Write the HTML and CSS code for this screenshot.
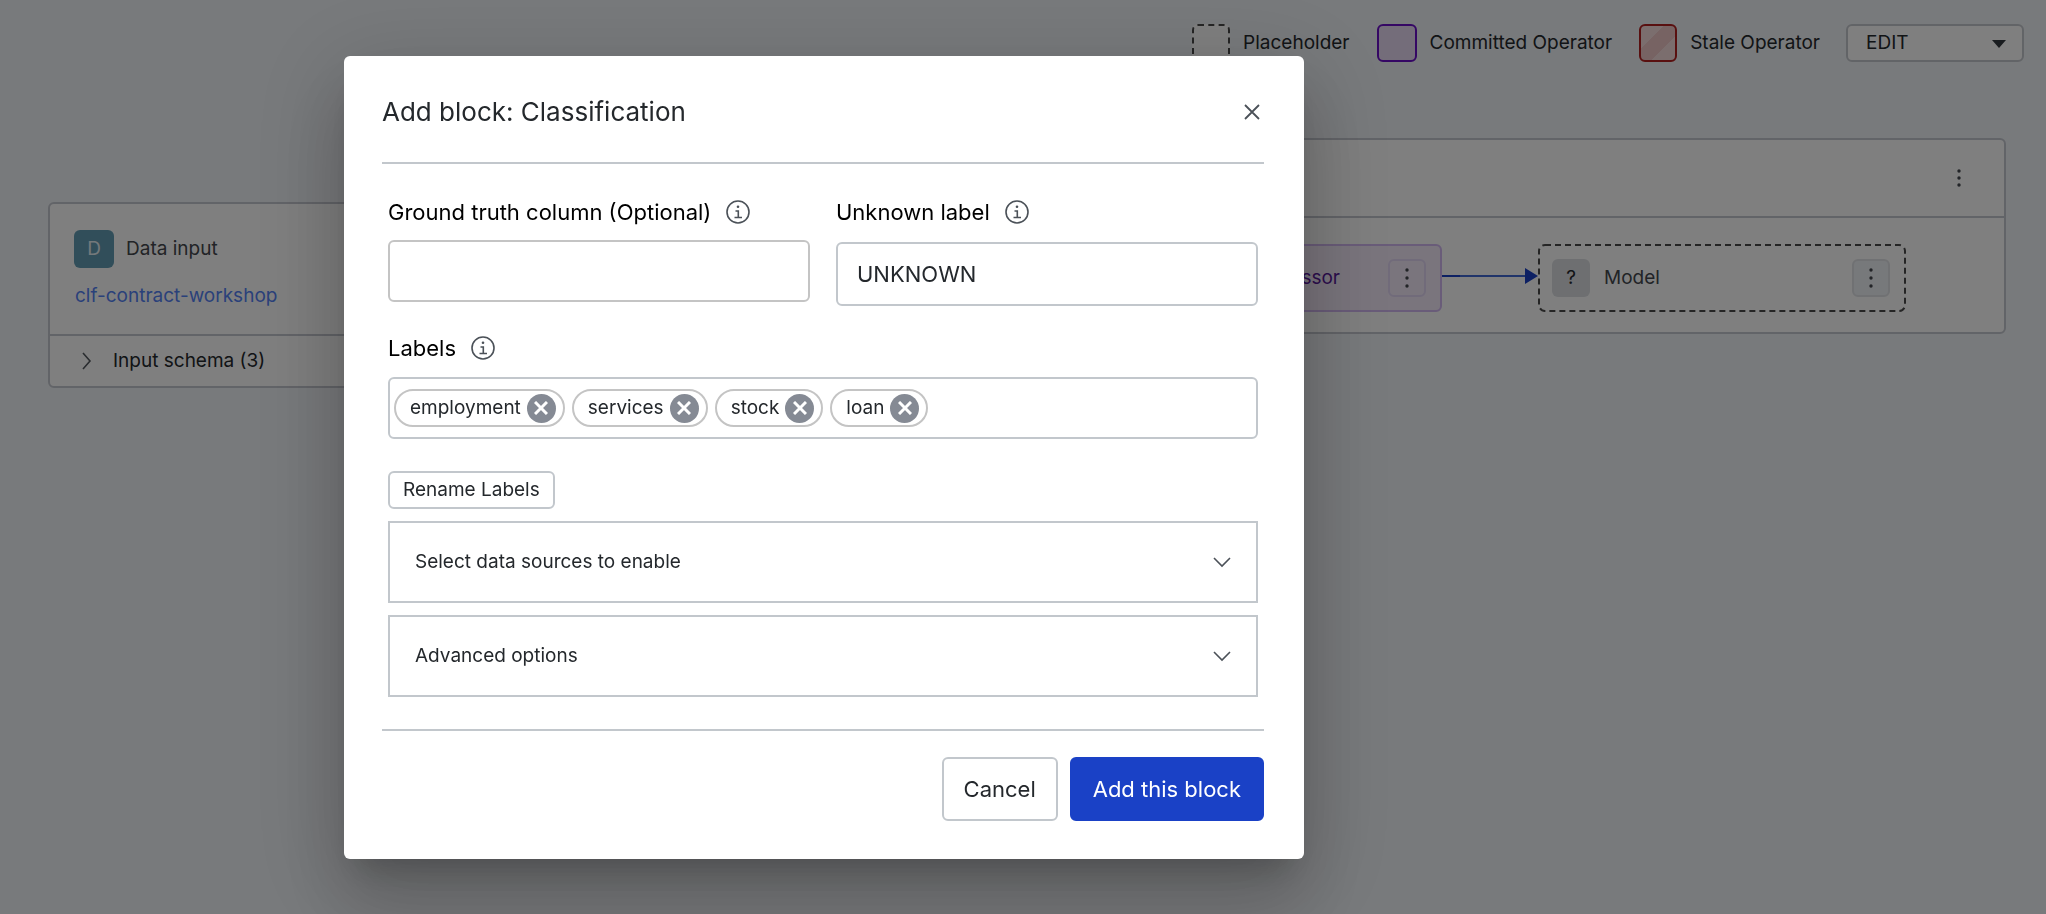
FILE: index.html
```html
<!DOCTYPE html>
<html lang="en">
    <head>
        <meta charset="utf-8">
        <title>Add block: Classification</title>
        <meta name="viewport" content="width=device-width, initial-scale=1.0">
        <link rel="stylesheet" href="styles.css">
    </head>
    <body>
        <header class="topbar">
            <ul class="legend">
                <li><span class="swatch placeholder"></span>Placeholder</li>
                <li><span class="swatch committed"></span>Committed Operator</li>
                <li><span class="swatch stale"></span>Stale Operator</li>
            </ul>
            <div class="mode">
                <select class="mode-select" aria-label="Mode">
                    <option>EDIT</option>
                </select>
                <svg class="mode-caret" width="14" height="8" viewBox="0 0 14 8"><path d="M0 0h14L7 8z" fill="#33383e"/></svg>
            </div>
        </header>

        <main class="flow">
            <section class="card input-card">
                <div class="input-body">
                    <div class="input-title"><span class="tile teal">D</span>Data input</div>
                    <a class="dataset" href="#">clf-contract-workshop</a>
                </div>
                <button class="schema" type="button">
                    <svg width="12" height="18" viewBox="0 0 12 18"><path d="M2 1l7 8-7 8" fill="none" stroke="#555a60" stroke-width="1.6"/></svg>
                    Input schema (3)
                </button>
            </section>

            <section class="card block-card">
                <div class="block-head">
                    <button class="kebab plain" type="button" aria-label="Block menu">
                        <svg width="4" height="20" viewBox="0 0 4 20"><circle cx="2" cy="3" r="1.7"/><circle cx="2" cy="10" r="1.7"/><circle cx="2" cy="17" r="1.7"/></svg>
                    </button>
                </div>
                <div class="nodes">
                    <div class="node node-committed">
                        <span class="node-name">Preprocessor</span>
                        <button class="kebab" type="button" aria-label="Preprocessor menu">
                            <svg width="4" height="20" viewBox="0 0 4 20"><circle cx="2" cy="2" r="1.7"/><circle cx="2" cy="10" r="1.7"/><circle cx="2" cy="18" r="1.7"/></svg>
                        </button>
                    </div>
                    <svg class="arrow" width="96" height="20" viewBox="0 0 96 20"><path d="M0 7h18v2H0z" fill="#1a41c6"/><path d="M18 7h65v2H18z" fill="#4169d5"/><path d="M83 0l13 8-13 8z" fill="#1a41c6"/></svg>
                    <div class="node node-placeholder">
                        <svg class="dash" width="100%" height="100%"><rect x="1" y="1" rx="6"/></svg>
                        <span class="tile grey">?</span>
                        <span class="node-name">Model</span>
                        <button class="kebab" type="button" aria-label="Model menu">
                            <svg width="4" height="20" viewBox="0 0 4 20"><circle cx="2" cy="2" r="1.7"/><circle cx="2" cy="10" r="1.7"/><circle cx="2" cy="18" r="1.7"/></svg>
                        </button>
                    </div>
                </div>
            </section>
        </main>

        <div class="overlay">
            <form class="dialog" role="dialog" aria-labelledby="dialog-title">
                <div class="dialog-head">
                    <h1 id="dialog-title">Add block: Classification</h1>
                    <button class="close" type="button" aria-label="Close">
                        <svg width="16" height="16" viewBox="0 0 16 16"><path d="M1 1l14 14M15 1L1 15" fill="none" stroke="#4b5158" stroke-width="1.8"/></svg>
                    </button>
                </div>

                <div class="dialog-body">
                    <div class="fields">
                        <div class="field">
                            <div class="field-label">
                                <label for="truth">Ground truth column (Optional)</label>
                                <svg class="info" viewBox="0 0 24 24"><circle cx="12" cy="12" r="11"/><path d="M9.500 11h2.800v6.200M8.500 17.500h7.500"/><circle class="dot" cx="12" cy="6.800" r="1.300"/></svg>
                            </div>
                            <input class="text-box truth" id="truth" type="text">
                        </div>
                        <div class="field">
                            <div class="field-label">
                                <label for="unknown">Unknown label</label>
                                <svg class="info" viewBox="0 0 24 24"><circle cx="12" cy="12" r="11"/><path d="M9.500 11h2.800v6.200M8.500 17.500h7.500"/><circle class="dot" cx="12" cy="6.800" r="1.300"/></svg>
                            </div>
                            <input class="text-box unknown" id="unknown" type="text" value="UNKNOWN">
                        </div>
                    </div>

                    <div class="field">
                        <div class="field-label">
                            <label for="labels">Labels</label>
                            <svg class="info" viewBox="0 0 24 24"><circle cx="12" cy="12" r="11"/><path d="M9.500 11h2.800v6.200M8.500 17.500h7.500"/><circle class="dot" cx="12" cy="6.800" r="1.300"/></svg>
                        </div>
                        <div class="tags">
                            <span class="tag">employment <button class="remove" type="button" aria-label="Remove employment"><svg width="14" height="14" viewBox="0 0 14 14"><path d="M1 1l12 12M13 1L1 13"/></svg></button></span>
                            <span class="tag">services <button class="remove" type="button" aria-label="Remove services"><svg width="14" height="14" viewBox="0 0 14 14"><path d="M1 1l12 12M13 1L1 13"/></svg></button></span>
                            <span class="tag">stock <button class="remove" type="button" aria-label="Remove stock"><svg width="14" height="14" viewBox="0 0 14 14"><path d="M1 1l12 12M13 1L1 13"/></svg></button></span>
                            <span class="tag">loan <button class="remove" type="button" aria-label="Remove loan"><svg width="14" height="14" viewBox="0 0 14 14"><path d="M1 1l12 12M13 1L1 13"/></svg></button></span>
                            <input class="tag-input" id="labels" type="text">
                        </div>
                    </div>

                    <button class="rename" type="button">Rename Labels</button>

                    <details class="panel">
                        <summary>Select data sources to enable
                            <svg width="18" height="12" viewBox="0 0 18 12"><path d="M1 2l8 8 8-8"/></svg>
                        </summary>
                    </details>
                    <details class="panel">
                        <summary>Advanced options
                            <svg width="18" height="12" viewBox="0 0 18 12"><path d="M1 2l8 8 8-8"/></svg>
                        </summary>
                    </details>
                </div>

                <div class="dialog-foot">
                    <button class="btn" type="button">Cancel</button>
                    <button class="btn primary" type="submit">Add this block</button>
                </div>
            </form>
        </div>
    </body>
</html>
```
FILE: styles.css
```css
* {
  box-sizing: border-box;
}
body {
  margin: 0;
  background: #f1f4f8;
  color: #24282c;
  font-family: Inter, "Liberation Sans", sans-serif;
  font-size: 19px;
  line-height: 24px;
}
button, input, select {
  font: inherit;
  color: inherit;
}
button {
  padding: 0;
  border: 0;
  background: none;
  cursor: pointer;
}
svg {
  display: block;
  flex: none;
}

/* top bar */
.topbar {
  display: flex;
  justify-content: flex-end;
  gap: 26px;
  padding: 24px 22px 0;
}
.legend {
  display: flex;
  gap: 27px;
  margin: 0;
  padding: 0;
  list-style: none;
}
.legend li {
  display: flex;
  align-items: center;
  gap: 13px;
}
.swatch {
  width: 38px;
  height: 38px;
  border: 2px solid;
  border-radius: 6px;
}
.swatch.placeholder {
  border: 2px dashed #4a4a4a;
  background: #fff;
}
.swatch.committed {
  width: 40px;
  border-color: #6a0fc8;
  background: #e9daf5;
}
.swatch.stale {
  border-color: #b32020;
  background: linear-gradient(135deg, #f6dcdc 33%, #eec6c6 33%, #eec6c6 66%, #f6dcdc 66%);
}
.mode {
  position: relative;
}
.mode-select {
  appearance: none;
  width: 178px;
  height: 38px;
  padding: 0 18px;
  border: 2px solid #c5c8ce;
  border-radius: 6px;
  background: #fff;
}
.mode-caret {
  position: absolute;
  top: 16px;
  right: 18px;
  pointer-events: none;
}

/* pipeline behind the dialog */
.flow {
  display: flex;
  align-items: flex-start;
  gap: 96px;
  padding: 76px 40px 0 48px;
}
.card {
  border: 2px solid #c5c8d0;
  border-radius: 6px;
  background: #fff;
}
.input-card {
  width: 420px;
  margin-top: 64px;
}
.input-body {
  height: 130px;
  padding: 26px 24px 0;
}
.input-title {
  display: flex;
  align-items: center;
  gap: 12px;
  color: #44484e;
}
.tile {
  display: flex;
  align-items: center;
  justify-content: center;
  width: 38px;
  height: 38px;
  border-radius: 6px;
}
.tile.teal {
  width: 40px;
  background: #629cb4;
  color: #e8f2f6;
}
.tile.grey {
  background: #dcdfe3;
  color: #24282c;
}
.dataset {
  display: inline-block;
  margin-top: 16px;
  padding-left: 1px;
  color: #5582f4;
  text-decoration: none;
}
.schema {
  display: flex;
  align-items: center;
  gap: 20px;
  width: 100%;
  height: 52px;
  padding-left: 31px;
  border-top: 2px solid #c5c8d0;
}
.block-card {
  flex: 1;
}
.block-head {
  display: flex;
  justify-content: flex-end;
  align-items: center;
  height: 78px;
  padding-right: 26px;
  border-bottom: 2px solid #c5c8d0;
}
.nodes {
  display: flex;
  align-items: center;
  justify-content: flex-end;
  padding: 26px 98px 20px 40px;
}
.node {
  display: flex;
  align-items: center;
  gap: 14px;
  width: 368px;
  height: 68px;
  padding: 0 16px 0 14px;
  border-radius: 6px;
}
.node-name {
  flex: 1;
  color: #44484e;
}
.node-committed {
  border: 2px solid #d3b8f2;
  padding: 0 14px;
  background: #f5ebfb;
}
.node-committed .node-name {
  padding-right: 34px;
  color: #5a1a9c;
  text-align: right;
}
.node-placeholder {
  position: relative;
}
.dash {
  position: absolute;
  inset: 0;
}
.dash rect {
  width: calc(100% - 2px);
  height: calc(100% - 2px);
  fill: none;
  stroke: #4a4a4a;
  stroke-width: 2;
  stroke-dasharray: 6 4;
}
.kebab {
  display: flex;
  align-items: center;
  justify-content: center;
  position: relative;
  width: 38px;
  height: 38px;
  border: 2px solid #e0e3e7;
  border-radius: 6px;
  background: #eff2f6;
  fill: #44484e;
}
.kebab.plain {
  border: 0;
  background: none;
}
.node-committed .kebab {
  border-color: #e2d6f4;
  background: none;
}

/* dialog */
.overlay {
  position: fixed;
  inset: 0;
  padding: 56px 0 0 344px;
  background: rgba(0, 0, 0, .5);
}
.dialog {
  max-width: 960px;
  padding: 34px 40px 38px 38px;
  border-radius: 6px;
  background: #fff;
  box-shadow: 0 22px 30px -14px rgba(0, 0, 0, .2), 0 48px 76px 6px rgba(0, 0, 0, .14), 0 18px 92px 16px rgba(0, 0, 0, .12);
}
.dialog-head {
  display: flex;
  align-items: center;
  justify-content: space-between;
  height: 74px;
  padding-bottom: 28px;
  border-bottom: 2px solid #c2c7cc;
}
.dialog-head h1 {
  margin: 0;
  font-size: 26px;
  font-weight: 400;
  line-height: 40px;
}
.close {
  padding: 4px;
}
.dialog-body {
  padding: 32px 6px;
}
.fields {
  display: grid;
  grid-template-columns: 1fr 1fr;
  gap: 26px;
}
.field-label {
  display: flex;
  align-items: center;
  gap: 15px;
  height: 32px;
  color: #000;
  font-size: 22px;
}
.info {
  width: 24px;
  height: 24px;
  fill: none;
  stroke: #4b5158;
  stroke-width: 1.6;
}
.info .dot {
  fill: #4b5158;
  stroke: none;
}
.text-box {
  display: block;
  width: 100%;
  height: 64px;
  padding: 0 19px;
  border: 2px solid #c2c7cc;
  border-radius: 6px;
  background: #fff;
  font-size: 22px;
}
.unknown {
  margin-top: 14px;
}
.truth {
  height: 62px;
  margin-top: 12px;
  border-color: #c4c4c4;
}
.fields + .field {
  margin-top: 26px;
}
.tags {
  display: flex;
  align-items: center;
  gap: 7px;
  height: 62px;
  margin-top: 13px;
  padding: 0 4px;
  border: 2px solid #c2c7cc;
  border-radius: 6px;
}
.tag {
  display: flex;
  align-items: center;
  gap: 6px;
  height: 38px;
  padding: 0 7px 0 14px;
  border: 2px solid #c4c4c4;
  border-radius: 19px;
}
.remove {
  display: flex;
  align-items: center;
  justify-content: center;
  width: 29px;
  height: 29px;
  border-radius: 50%;
  background: #858a94;
}
.remove path {
  fill: none;
  stroke: #fff;
  stroke-width: 3;
}
.tag-input {
  flex: 1;
  min-width: 0;
  border: 0;
  outline: 0;
  background: none;
}
.rename {
  height: 38px;
  margin-top: 32px;
  padding: 0 13px;
  border: 2px solid #c2c7cc;
  border-radius: 6px;
}
.panel {
  margin-top: 12px;
  border: 2px solid #c2c7cc;
}
.panel summary {
  display: flex;
  align-items: center;
  justify-content: space-between;
  height: 78px;
  padding: 0 25px;
  cursor: pointer;
}
.panel path {
  fill: none;
  stroke: #4b5158;
  stroke-width: 1.6;
}
.dialog-foot {
  display: flex;
  justify-content: flex-end;
  gap: 12px;
  padding-top: 26px;
  border-top: 2px solid #c2c7cc;
}
.btn {
  height: 64px;
  padding: 0 20px;
  border: 2px solid #c2c7cc;
  border-radius: 6px;
  font-size: 22px;
}
.btn.primary {
  padding: 0 21px;
  border-color: #1a41c6;
  background: #1a41c6;
  color: #fff;
}
```
